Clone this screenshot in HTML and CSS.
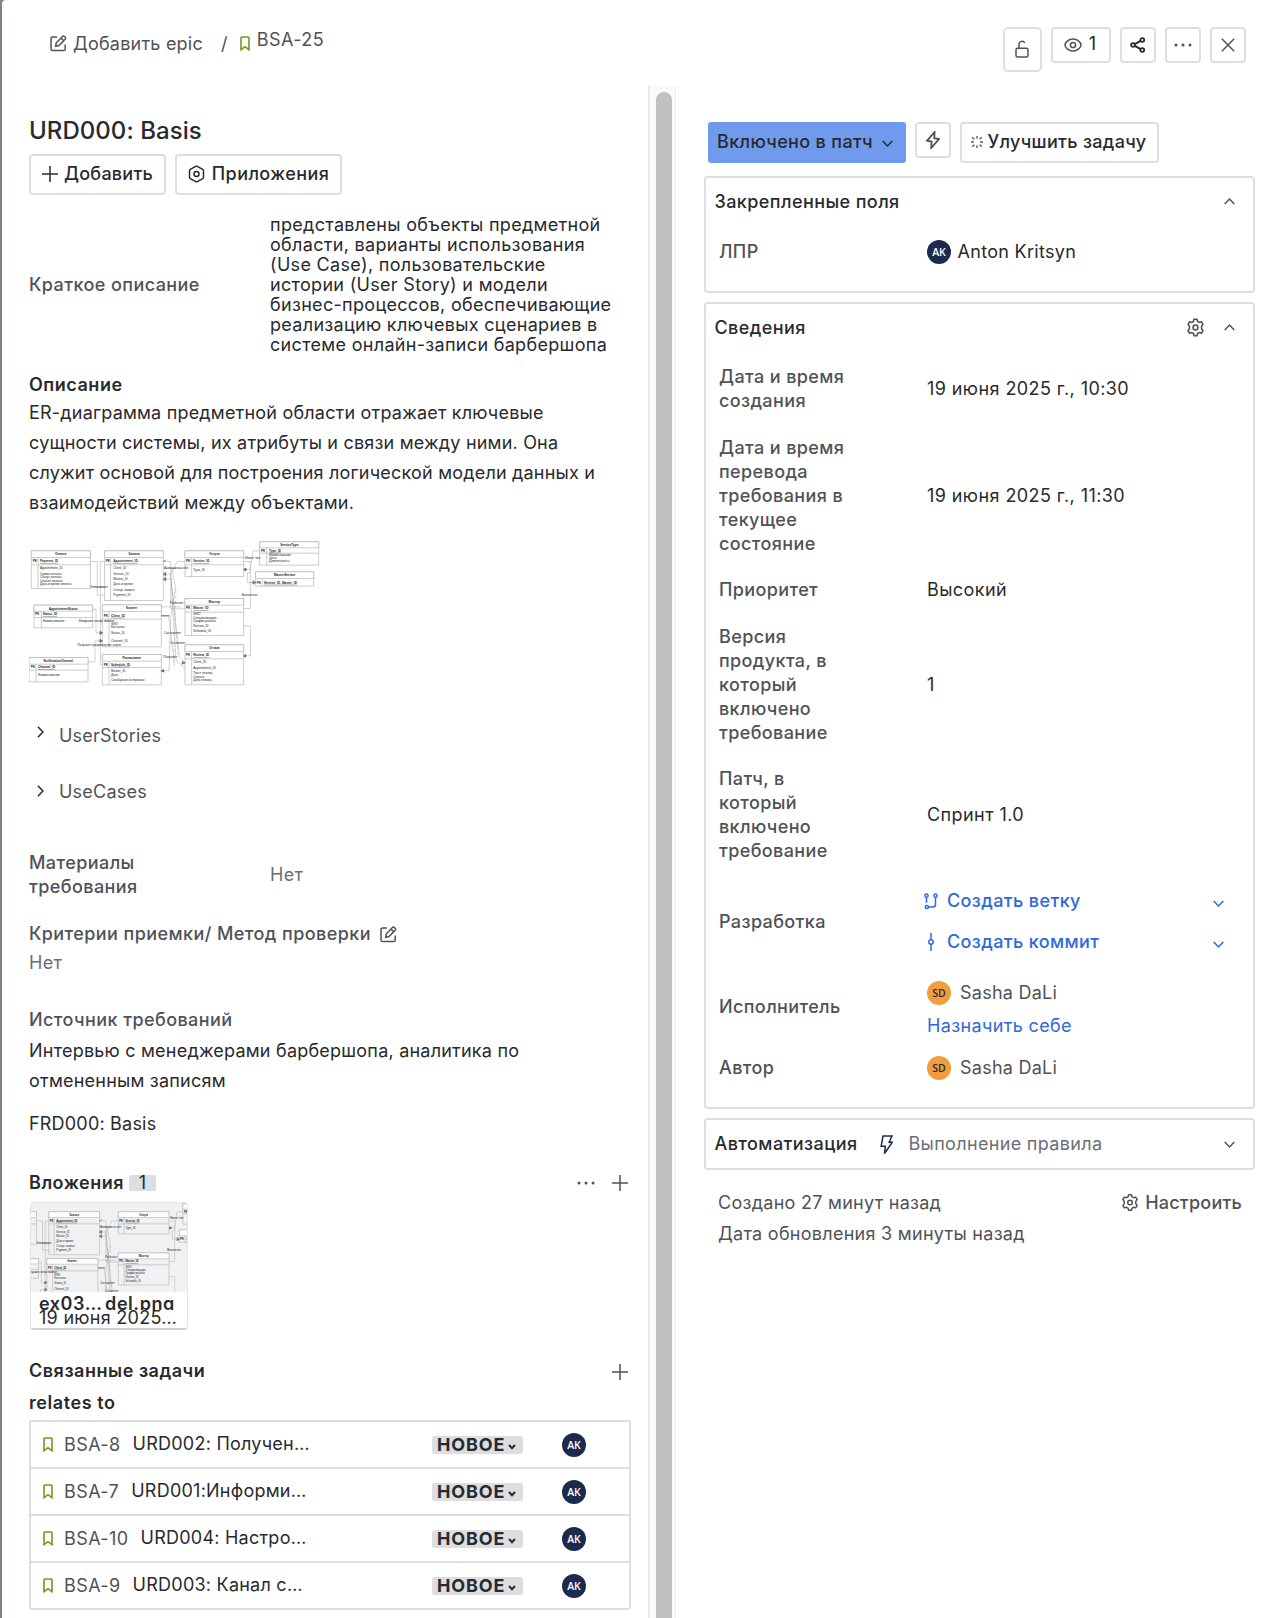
FILE: index.html
```html
<!DOCTYPE html>
<html lang="ru">
<head>
<meta charset="utf-8">
<title>BSA-25</title>
<link rel="stylesheet" href="styles.css">
</head>
<body>
<svg class="defs" aria-hidden="true">
  <symbol id="edit" viewBox="0 0 17 17"><path d="M7 1.900H2.600A1.600 1.600 0 0 0 1 3.500v10.400A1.600 1.600 0 0 0 2.600 15.500h11A1.600 1.600 0 0 0 15.200 13.900V9.500M5.600 11.300l.7-3.500 6.200-6.300a1.300 1.300 0 0 1 1.900 0l.8.8a1.300 1.300 0 0 1 0 1.900L9 10.500zM11 3.100l2.700 2.700"/></symbol>
  <symbol id="bookmark" viewBox="0 0 10 15"><path d="M1 2a1 1 0 0 1 1-1h6a1 1 0 0 1 1 1v11.700l-4-3-4 3z"/></symbol>
  <symbol id="lock" viewBox="0 0 14 18"><rect x="1" y="8.200" width="12" height="8.800" rx="1.600"/><path d="M4 8V4.200A3 3 0 0 1 9.700 3"/></symbol>
  <symbol id="eye" viewBox="0 0 18 14"><path d="M9 1C4.500 1 1 4.500 1 7s3.500 6 8 6 8-3.500 8-6-3.500-6-8-6z"/><circle cx="9" cy="7" r="2.600"/></symbol>
  <symbol id="share" viewBox="0 0 16 16"><circle cx="3" cy="8" r="1.900"/><circle cx="12.300" cy="3" r="1.900"/><circle cx="12.300" cy="13" r="1.900"/><path d="M4.800 7.100l5.800-3.200M4.800 8.900l5.800 3.200"/></symbol>
  <symbol id="dots" viewBox="0 0 18 4"><g fill="currentColor" stroke="none"><circle cx="2" cy="2" r="1.500"/><circle cx="9" cy="2" r="1.500"/><circle cx="16" cy="2" r="1.500"/></g></symbol>
  <symbol id="close" viewBox="0 0 14 14"><path d="M.8.8l12.400 12.400M13.200.8L.8 13.200"/></symbol>
  <symbol id="plus" viewBox="0 0 16 16"><path d="M8 0v16M0 8h16"/></symbol>
  <symbol id="hex" viewBox="0 0 17 18"><path d="M7.700 1.300a1.600 1.600 0 0 1 1.600 0l5.400 3.100a1.600 1.600 0 0 1 .8 1.400v6.400a1.600 1.600 0 0 1-.8 1.400l-5.400 3.100a1.600 1.600 0 0 1-1.600 0l-5.400-3.100a1.600 1.600 0 0 1-.8-1.400V5.800a1.600 1.600 0 0 1 .8-1.400z"/><circle cx="8.500" cy="9" r="2.500"/></symbol>
  <symbol id="down" viewBox="0 0 11 7"><path d="M.7.900l4.800 5 4.800-5"/></symbol>
  <symbol id="up" viewBox="0 0 11 7"><path d="M.7 6.100l4.800-5 4.800 5"/></symbol>
  <symbol id="right" viewBox="0 0 7 12"><path d="M.9.800l5 5.200-5 5.200"/></symbol>
  <symbol id="flash" viewBox="0 0 14 18"><path d="M8.600 1L1 9.800l4.600.8L5.200 17 13 8l-4.700-.8z"/></symbol>
  <symbol id="bolt" viewBox="0 0 13 20"><path d="M3 1h9L9.200 7.300h3L4.500 18.500l.8-7.300H1.200z"/></symbol>
  <symbol id="spark" viewBox="0 0 12 12"><path d="M6 0v2.800M6 9.200V12M0 6h2.800M9.200 6H12M1.200 1.200l2.200 2.200M8.600 8.600l2.200 2.200M10.800 1.200L8.600 3.400M3.400 8.600l-2.200 2.200"/></symbol>
  <symbol id="gear" viewBox="0 0 18 18"><path stroke-linejoin="round" d="M7.600 1.200h2.800l.6 2.100 1.500.9 2.200-.6 1.400 2.400-1.200 1.600q-.4 1.400 0 2.800l1.200 1.600-1.400 2.400-2.200-.6-1.500.9-.6 2.100H7.600L7 14.700l-1.500-.9-2.200.6L1.900 12l1.200-1.600q.4-1.400 0-2.800L1.900 6l1.400-2.400 2.200.6L7 3.300z"/><circle cx="9" cy="9" r="2.300"/></symbol>
  <symbol id="branch" viewBox="0 0 14 17"><circle cx="2.500" cy="2.700" r="1.600"/><circle cx="11.500" cy="2.700" r="1.600"/><circle cx="2.800" cy="14" r="1.600"/><path d="M2.500 4.300v5.400M11.500 4.300v7.200a2.500 2.500 0 0 1-2.500 2.500H4.500"/></symbol>
  <symbol id="commit" viewBox="0 0 8 18"><circle cx="4" cy="9" r="2.200"/><path d="M4 0v6.800M4 11.200V18"/></symbol>
  <symbol id="er" viewBox="0 0 1020 510">
    <g class="er-box">
      <path d="M94 62h177v113H94zM314 62h176v149H314zM555 62h176v77H555zM779 35h177v70H779zM767 125h174v43H767zM102 225h176v68H102zM307 224h177v126H307zM555 205h176v111H555zM87 382h177v73H87zM307 373h177v91H307zM555 344h176v120H555z"/>
      <g class="er-head"><path d="M94 62h177v20H94zM314 62h176v20H314zM555 62h176v20H555zM779 35h177v18H779zM767 125h174v20H767zM102 225h176v18H102zM307 224h177v20H307zM555 205h176v20H555zM87 382h177v20H87zM307 373h177v20H307zM555 344h176v20H555z"/></g>
      <path d="M94 104h177M314 104h176M555 104h176M779 69h177M102 262h176M307 267h177M555 246h176M87 420h177M307 412h177M555 386h176M114 82v93M332 82v129M575 82v57M800 53v52M787 145v23M124 243v50M327 244v106M575 225v91M108 402v53M327 393v71M575 364v100"/>
    </g>
    <g class="er-link">
      <path d="M271 94h21v101h22M314 94h-13v310h6M271 170h42M278 237h10v71h19M264 395h21v-63h22M490 94h22v142h43M490 115h55M490 132h22l20-38h23M490 147h23l25 232 17 19M484 230h60M512 130l16 260 27 25M484 422h23l5-160 15-90-12-60M731 94h20v141h-20M731 118h20l8-56h20M731 287h20v90h-20M742 157h25M742 157v-28l10-5M484 257h22l18 150"/>
      <path stroke-dasharray="9 7" d="M528 180l-7 220M513 140l22 240M235 272h100"/>
      <path class="er-dark" d="M484 257h24M490 94l7-4M490 132l7-5v10zM490 147l7-5v10zM307 308l-7-4v8zM307 332l-7-4v8zM731 118l7-4v8zM767 157l-8-5v10zM731 377l6-4v8zM555 398l-8-4v8zM484 422l7-4v8z"/>
    </g>
    <g class="er-text">
      <g class="er-title"><text x="182" y="76">Оплата</text><text x="402" y="76">Запись</text><text x="643" y="76">Услуга</text><text x="868" y="48">ServiceType</text><text x="854" y="139">MasterService</text><text x="190" y="239">AppointmentStatus</text><text x="395" y="238">Клиент</text><text x="643" y="218">Мастер</text><text x="175" y="397">NotificationChannel</text><text x="395" y="387">Расписание</text><text x="643" y="358">Отзыв</text></g>
      <g class="er-key"><text x="98" y="97">PK</text><text x="317" y="97">PK</text><text x="558" y="97">PK</text><text x="783" y="65">PK</text><text x="770" y="161">PK</text><text x="105" y="255">PK</text><text x="311" y="260">PK</text><text x="558" y="238">PK</text><text x="92" y="415">PK</text><text x="311" y="407">PK</text><text x="558" y="379">PK</text>
      <g text-decoration="underline"><text x="120" y="97">Payment_ID</text><text x="340" y="97">Appointment_ID</text><text x="580" y="97">Service_ID</text><text x="807" y="65">Type_ID</text><text x="792" y="161">Service_ID, Master_ID</text><text x="128" y="255">Status_ID</text><text x="333" y="260">Client_ID</text><text x="580" y="238">Master_ID</text><text x="114" y="415">Channel_ID</text><text x="333" y="407">Schedule_ID</text><text x="580" y="379">Review_ID</text></g></g>
      <text x="120" y="118">Appointment_ID</text><text x="120" y="135">Сумма оплаты</text><text x="120" y="145">Статус оплаты</text><text x="120" y="155">Способ оплаты</text><text x="120" y="165">Дата и время оплаты</text>
      <text x="340" y="118">Client_ID</text><text x="340" y="135">Service_ID</text><text x="340" y="150">Master_ID</text><text x="340" y="166">Дата и время</text><text x="340" y="184">Статус записи</text><text x="340" y="199">Payment_ID</text>
      <text x="580" y="122">Type_ID</text><text x="807" y="77">Наименование</text><text x="807" y="87">Цена</text><text x="807" y="97">Длительность</text>
      <text x="128" y="276">Наименование</text><text x="333" y="286">ФИО</text><text x="333" y="295">Контакты</text><text x="333" y="311">Status_ID</text><text x="333" y="335">Channel_ID</text>
      <text x="580" y="256">ФИО</text><text x="580" y="267">Специализация</text><text x="580" y="277">График работы</text><text x="580" y="292">Review_ID</text><text x="580" y="305">Schedule_ID</text>
      <text x="114" y="437">Наименование</text><text x="333" y="425">Master_ID</text><text x="333" y="439">Дата</text><text x="333" y="453">Свободные интервалы</text>
      <text x="580" y="400">Client_ID</text><text x="580" y="418">Appointment_ID</text><text x="580" y="433">Текст отзыва</text><text x="580" y="443">Оценка</text><text x="580" y="453">Дата отзыва</text>
      <text x="271" y="173">Оплачивает</text><text x="492" y="118">Включает в себя</text><text x="735" y="88">Имеет тип</text><text x="725" y="198">Выполняет</text><text x="237" y="276">Получает статус записи</text><text x="232" y="348">Получает уведомление через</text><text x="492" y="311">Составляет</text><text x="510" y="342">Оставляет</text><text x="490" y="384">Получает</text><text x="510" y="222">Работает</text>
    </g>
  </symbol>
</svg>

<div class="panel">
  <header class="top">
    <nav class="crumbs">
      <svg class="ic edit"><use href="#edit"/></svg><span class="epic">Добавить epic</span><span class="slash">/</span>
      <svg class="ic bookmark"><use href="#bookmark"/></svg><span class="key">BSA-25</span>
    </nav>
    <div class="tools">
      <button class="btn tool-lock"><svg class="ic" width="14" height="18"><use href="#lock"/></svg></button>
      <button class="btn tool-eye"><svg class="ic" width="18" height="14"><use href="#eye"/></svg><span>1</span></button>
      <button class="btn tool dark"><svg class="ic thick" width="16" height="16"><use href="#share"/></svg></button>
      <button class="btn tool"><svg class="ic" width="18" height="4"><use href="#dots"/></svg></button>
      <button class="btn tool"><svg class="ic" width="14" height="14"><use href="#close"/></svg></button>
    </div>
  </header>

  <div class="cols">
    <main class="left">
      <h1>URD000: Basis</h1>
      <div class="actions">
        <button class="btn add"><svg class="ic" width="16" height="16"><use href="#plus"/></svg>Добавить</button>
        <button class="btn apps"><svg class="ic" width="17" height="18"><use href="#hex"/></svg>Приложения</button>
      </div>
      <div class="field summary">
        <span class="label">Краткое описание</span>
        <p>представлены объекты предметной<br>области, варианты использования<br>(Use Case), пользовательские<br>истории (User Story) и модели<br>бизнес-процессов, обеспечивающие<br>реализацию ключевых сценариев в<br>системе онлайн-записи барбершопа</p>
      </div>
      <h2 class="desc-title">Описание</h2>
      <p class="text">ER-диаграмма предметной области отражает ключевые<br>сущности системы, их атрибуты и связи между ними. Она<br>служит основой для построения логической модели данных и<br>взаимодействий между объектами.</p>
      <svg class="diagram" viewBox="87 30 873 440"><use href="#er" width="1020" height="510"/></svg>
      <div class="expand stories"><svg class="ic" width="7" height="12"><use href="#right"/></svg>UserStories</div>
      <div class="expand cases"><svg class="ic" width="7" height="12"><use href="#right"/></svg>UseCases</div>
      <div class="field materials">
        <span class="label">Материалы<br>требования</span><span class="none">Нет</span>
      </div>
      <div class="criteria"><span class="label">Критерии приемки/ Метод проверки</span><svg class="ic" width="17" height="17"><use href="#edit"/></svg></div>
      <div class="none">Нет</div>
      <div class="label source">Источник требований</div>
      <p class="text interview">Интервью с менеджерами барбершопа, аналитика по<br>отмененным записям</p>
      <p class="text frd">FRD000: Basis</p>

      <div class="section attach">
        <h2>Вложения</h2><span class="count">1</span>
        <svg class="ic push" width="18" height="4"><use href="#dots"/></svg>
        <svg class="ic" width="16" height="16"><use href="#plus"/></svg>
      </div>
      <figure class="file">
        <svg class="thumb" viewBox="252 30 541.500 312" preserveAspectRatio="xMidYMid slice"><use href="#er" width="1020" height="510"/></svg>
        <figcaption><b>ex03… del.png</b><span>19 июня 2025…</span></figcaption>
      </figure>

      <div class="section linked"><h2>Связанные задачи</h2><svg class="ic push" width="16" height="16"><use href="#plus"/></svg></div>
      <h3>relates to</h3>
      <ul class="links">
        <li><svg class="ic bookmark"><use href="#bookmark"/></svg><span class="key">BSA-8</span><span class="name">URD002: Получен…</span><span class="status">НОВОЕ<svg class="ic" viewBox="0 0 8 6"><path d="M1 1l3 3.200L7 1"/></svg></span><span class="avatar">AK</span></li>
        <li><svg class="ic bookmark"><use href="#bookmark"/></svg><span class="key">BSA-7</span><span class="name">URD001:Информи…</span><span class="status">НОВОЕ<svg class="ic" viewBox="0 0 8 6"><path d="M1 1l3 3.200L7 1"/></svg></span><span class="avatar">AK</span></li>
        <li><svg class="ic bookmark"><use href="#bookmark"/></svg><span class="key">BSA-10</span><span class="name">URD004: Настро…</span><span class="status">НОВОЕ<svg class="ic" viewBox="0 0 8 6"><path d="M1 1l3 3.200L7 1"/></svg></span><span class="avatar">AK</span></li>
        <li><svg class="ic bookmark"><use href="#bookmark"/></svg><span class="key">BSA-9</span><span class="name">URD003: Канал с…</span><span class="status">НОВОЕ<svg class="ic" viewBox="0 0 8 6"><path d="M1 1l3 3.200L7 1"/></svg></span><span class="avatar">AK</span></li>
      </ul>
    </main>

    <div class="scroll"><div class="thumb-bar"></div></div>

    <aside class="right">
      <div class="state">
        <button class="status-btn">Включено в патч<svg class="ic" width="11" height="7"><use href="#down"/></svg></button>
        <button class="btn rule"><svg class="ic thick" width="14" height="18"><use href="#flash"/></svg></button>
        <button class="btn improve"><svg class="ic" width="12" height="12"><use href="#spark"/></svg>Улучшить задачу</button>
      </div>

      <section class="card pinned">
        <div class="card-head"><h4>Закрепленные поля</h4><svg class="ic push" width="11" height="7"><use href="#up"/></svg></div>
        <div class="row"><span class="label">ЛПР</span><div class="person dark"><span class="avatar">AK</span>Anton Kritsyn</div></div>
      </section>

      <section class="card details">
        <div class="card-head"><h4>Сведения</h4><svg class="ic push" width="19" height="19"><use href="#gear"/></svg><svg class="ic" width="11" height="7"><use href="#up"/></svg></div>
        <div class="rows">
          <div class="row"><span class="label">Дата и время создания</span><span>19 июня 2025 г., 10:30</span></div>
          <div class="row"><span class="label">Дата и время перевода требования в текущее состояние</span><span>19 июня 2025 г., 11:30</span></div>
          <div class="row"><span class="label">Приоритет</span><span>Высокий</span></div>
          <div class="row"><span class="label">Версия продукта, в который включено требование</span><span>1</span></div>
          <div class="row"><span class="label">Патч, в который включено требование</span><span>Спринт 1.0</span></div>
        </div>
        <div class="row dev">
          <span class="label">Разработка</span>
          <div class="dev-links">
            <a><i><svg class="ic" width="14" height="17"><use href="#branch"/></svg></i>Создать ветку<svg class="ic push" width="11" height="7"><use href="#down"/></svg></a>
            <a><i><svg class="ic" width="8" height="18"><use href="#commit"/></svg></i>Создать коммит<svg class="ic push" width="11" height="7"><use href="#down"/></svg></a>
          </div>
        </div>
        <div class="row assignee">
          <span class="label">Исполнитель</span>
          <div><div class="person"><span class="avatar sd">SD</span>Sasha DaLi</div><a class="self">Назначить себе</a></div>
        </div>
        <div class="row author"><span class="label">Автор</span><div class="person"><span class="avatar sd">SD</span>Sasha DaLi</div></div>
      </section>

      <section class="card auto">
        <h4>Автоматизация</h4><svg class="ic bolt" width="13" height="20"><use href="#bolt"/></svg><span>Выполнение правила</span><svg class="ic push" width="11" height="7"><use href="#down"/></svg>
      </section>

      <footer class="meta">
        <div>Создано 27 минут назад<br>Дата обновления 3 минуты назад</div>
        <div class="configure"><svg class="ic" width="18" height="19"><use href="#gear"/></svg>Настроить</div>
      </footer>
    </aside>
  </div>
</div>
</body>
</html>
```
FILE: styles.css
```css
* { box-sizing: border-box; }
html, body { height: 1618px; overflow: hidden; }
body {
  margin: 0;
  padding-left: 2px;
  background: #7d828c;
  color: #292a2e;
  font: 400 18px/24px Inter, "Noto Sans", sans-serif;
  letter-spacing: .28px;
}
h1, h2, h3, h4, p, ul, figure { margin: 0; padding: 0; font-size: inherit; }
.defs { position: absolute; width: 0; height: 0; }
.ic { flex: none; fill: none; stroke: currentColor; stroke-width: 1.5; color: #505258; overflow: visible; }
.thick { stroke-width: 1.8; }
.push { margin-left: auto; }

.panel { height: 1618px; background: #fff; border-top-left-radius: 4px; }
.top { display: flex; justify-content: space-between; height: 86px; padding: 27px 28px 0 48px; }
.crumbs { display: flex; align-items: flex-start; color: #505258; }
.crumbs .edit { width: 17px; height: 17px; margin-top: 8px; }
.epic { margin: 5px 0 0 6px; letter-spacing: .22px; }
.slash { margin: 5px 12px 0 18px; }
.bookmark { width: 10px; height: 15px; color: #6a9a23; stroke-width: 1.6; }
.crumbs .bookmark { margin-top: 9px; }
.crumbs .key { margin: 1px 0 0 7px; letter-spacing: .45px; }
.tools { display: flex; align-items: flex-start; gap: 9px; }
.btn {
  display: flex; align-items: center; justify-content: center;
  padding: 0; background: #fff; border: 2px solid #dddee1; border-radius: 4px;
  color: #292a2e; font: inherit; font-weight: 500; letter-spacing: inherit;
}
.tool-lock { width: 39px; height: 45px; padding: 0 2px 1px 0; border-radius: 5px; }
.tool-eye { width: 60px; height: 36px; padding-right: 2px; gap: 7px; font-weight: 400; }
.tool-eye span { margin-top: -2px; }
.tool { width: 36px; height: 36px; }
.dark .ic { color: #292a2e; }

.cols { display: flex; height: 1532px; }
.left { width: 646px; padding: 29px 17px 0 27px; }
h1 { height: 32px; font-size: 24px; line-height: 32px; font-weight: 500; letter-spacing: .05px; }
.actions { display: flex; gap: 9px; margin-top: 7px; }
.actions .btn { height: 41px; padding-bottom: 1px; }
.add { width: 137px; gap: 6px; letter-spacing: .25px; }
.apps { width: 167px; gap: 7px; letter-spacing: .42px; }
.actions .ic { color: #292a2e; }
.label { color: #505258; font-weight: 500; letter-spacing: .42px; }
.field { display: flex; align-items: center; }
.field .label { width: 190px; margin-right: 51px; flex: none; }
.summary { margin-top: 20px; }
.summary p { line-height: 20px; letter-spacing: .31px; white-space: nowrap; }
h2 { font-weight: 600; letter-spacing: .52px; }
.desc-title { margin-top: 18px; }
.text { line-height: 30px; letter-spacing: .2px; white-space: nowrap; }
.desc-title + .text { margin-top: 1px; }
.diagram { display: block; width: 291px; height: 147px; margin-top: 22px; }
.er-box { fill: none; stroke: #aaa; stroke-width: 1.8; }
.er-head { fill: #fff; }
.er-link { fill: none; stroke: #aaa; stroke-width: 1.6; }
.er-dark { stroke: #333; stroke-width: 2.2; }
.er-text { font: 9.5px "Liberation Sans", sans-serif; letter-spacing: 0; fill: #222; }
.er-title { text-anchor: middle; font-weight: 700; }
.er-key { font-weight: 700; }
.expand { display: flex; align-items: flex-start; gap: 15px; padding-left: 8px; color: #505258; letter-spacing: .23px; }
.expand .ic { margin-top: 2px; color: #292a2e; }
.stories { margin-top: 37px; }
.cases { margin-top: 32px; }
.cases .ic { margin-top: 5px; }
.materials { margin-top: 47px; }
.none { color: #6b6e76; }
.criteria { display: flex; align-items: center; gap: 9px; margin-top: 23px; }
.criteria + .none { margin-top: 5px; }
.source { margin-top: 33px; }
.interview { margin-top: 4px; letter-spacing: .22px; }
.frd { margin-top: 13px; }
.section { display: flex; align-items: center; height: 24px; padding-right: 3px; }
.attach { margin-top: 32px; }
.attach .ic { margin-top: -1px; }
.count { width: 27px; height: 16px; margin-left: 5px; background: #dddee1; border-radius: 2px; line-height: 16px; text-align: center; }
.section .ic + .ic { margin-left: 17px; }
.file { width: 158px; height: 128px; margin: 7px 0 0 1px; overflow: hidden; border: 1px solid #e4e5e7; border-bottom: 2px solid #cfd0d3; border-radius: 4px; }
.thumb { display: block; width: 156px; height: 89px; background: #f0f1f2; }
figcaption { display: flex; flex-direction: column; padding-left: 8px; white-space: nowrap; }
figcaption b { height: 18px; line-height: 24px; font-weight: 600; letter-spacing: .55px; word-spacing: -2px; overflow: hidden; }
figcaption span { line-height: 16px; letter-spacing: .28px; }
.linked { margin-top: 29px; }
.linked .ic { margin-top: 2px; }
h3 { margin-top: 8px; font-weight: 600; letter-spacing: .57px; }
.links { list-style: none; margin-top: 5px; width: 602px; border: 2px solid #dddee1; border-radius: 3px; }
.links li { display: grid; grid-template-columns: 10px auto 1fr 91px 63px; align-items: center; height: 47px; padding: 0 43px 0 12px; border-bottom: 2px solid #dddee1; }
.links li:last-child { border-bottom: 0; height: 45px; }
.links .key { margin: 1px 12px 0 11px; color: #505258; letter-spacing: .4px; }
.links .name { letter-spacing: .24px; margin-top: -1px; }
.status { display: flex; align-items: center; gap: 4px; height: 18px; padding-left: 5px; background: #dddee1; border-radius: 3px; font-weight: 700; letter-spacing: .85px; }
.status .ic { width: 8px; height: 6px; margin-top: 5px; margin-left: -1px; color: #292a2e; stroke-width: 2; }
.avatar { flex: none; display: block; width: 24px; height: 24px; border-radius: 50%; background: #1c2b4d; color: #fff; font: 600 10.5px/24px "Open Sans", "Noto Sans", sans-serif; text-align: center; letter-spacing: 0; }
.links .avatar { margin-left: 39px; }
.sd { background: #f19d3d; color: #292a2e; }

.scroll { width: 28px; padding: 6px 4px 0 6px; background: #fafafa; border-left: 2px solid #e8e8e8; border-right: 1px solid #ececec; }
.thumb-bar { width: 16px; height: 1526px; border-radius: 8px 8px 0 0; background: #c1c1c1; }

.right { width: 579px; padding: 36px 0 0 28px; }
.state { display: flex; align-items: flex-start; gap: 9px; padding-left: 4px; height: 54px; }
.status-btn { display: flex; align-items: center; gap: 9px; width: 198px; height: 41px; padding: 0 0 1px 9px; border: 0; border-radius: 3px; background: #709aeb; color: #292a2e; font: inherit; font-weight: 500; letter-spacing: .35px; }
.status-btn .ic { color: #292a2e; margin-top: 2px; }
.rule { width: 36px; height: 36px; padding-bottom: 1px; }
.improve { width: 199px; height: 41px; padding: 0 2px 1px 0; gap: 5px; letter-spacing: .32px; }
.improve .ic { stroke-width: 1.3; }
.card { width: 551px; border: 2px solid #dddee1; border-radius: 4px; }
h4 { font-weight: 500; letter-spacing: .42px; }
.card-head { display: flex; align-items: center; padding: 0 18px 0 8.5px; height: 24px; }
.card-head .ic { margin-top: -1px; }
.card-head .ic + .ic { margin-left: 19px; }
.pinned { height: 117px; padding-top: 12px; }
.row { display: grid; grid-template-columns: 140px 1fr; column-gap: 68px; align-items: center; padding: 0 29px 0 13px; }
.pinned .row { margin-top: 26px; }
.person { display: flex; align-items: center; gap: 9px; color: #505258; letter-spacing: .25px; }
.person.dark { gap: 6.5px; color: #292a2e; letter-spacing: .3px; }
.details { height: 807px; margin-top: 9px; padding-top: 12px; }
.rows { display: grid; row-gap: 22.6px; margin-top: 25px; }
.row > span:not(.label) { letter-spacing: .42px; }
.row .label { letter-spacing: .38px; }
.dev { margin-top: 26px; }
.dev-links { display: grid; row-gap: 17px; margin-left: -4px; }
.dev-links a { display: flex; align-items: center; color: #2f68dd; font-weight: 500; letter-spacing: .38px; }
.dev-links i { display: flex; justify-content: center; width: 15px; margin-right: 9px; }
.dev-links .ic { color: inherit; }
.dev-links .push { margin-top: 4px; }
.assignee { margin-top: 27px; }
.assignee .label { padding-bottom: 5px; }
.self { display: block; margin-top: 9px; color: #2f68dd; letter-spacing: .36px; }
.author { margin-top: 18px; }
.auto { display: flex; align-items: center; height: 52px; margin-top: 9px; padding: 0 18px 0 8.5px; }
.auto .bolt { margin: 1px 16px 0 22px; color: #1c2b4d; }
.auto span { color: #6b6e76; letter-spacing: .33px; }
.meta { display: flex; justify-content: space-between; align-items: flex-start; margin-top: 16.5px; padding: 0 13px 0 14px; line-height: 31px; color: #505258; }
.configure { display: flex; align-items: center; gap: 6px; font-weight: 500; letter-spacing: .22px; }
```
